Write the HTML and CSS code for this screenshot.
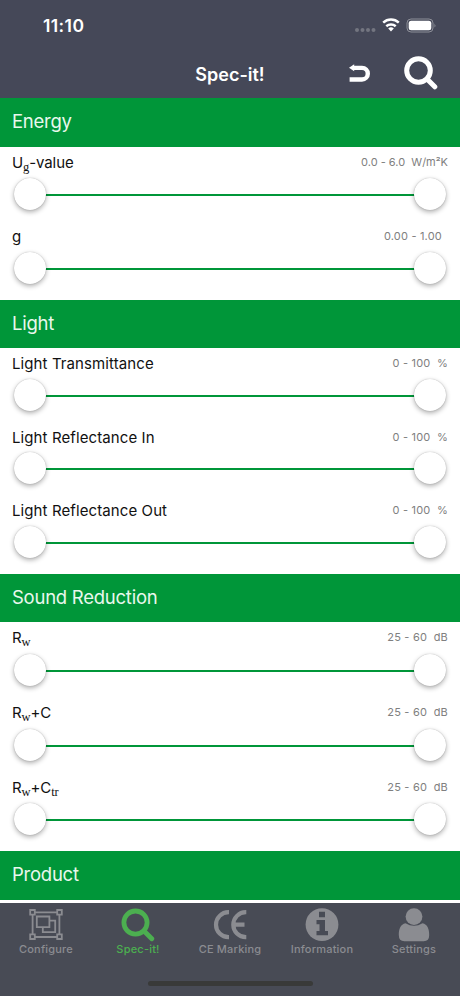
FILE: index.html
```
<!DOCTYPE html>
<html lang="en">
<head>
    <meta charset="UTF-8">
    <meta name="viewport" content="width=device-width, initial-scale=1.0">
    <title>Spec-it!</title>
    <link rel="stylesheet" href="styles.css">
</head>
<body>
<div class="app">
    <header class="top">
        <div class="status">
            <span class="time">11:10</span>
            <svg class="status-icons" width="84" height="20" viewBox="0 0 84 20">
                <g fill="#737580">
                    <circle cx="4" cy="14" r="2"/><circle cx="9.5" cy="14" r="2"/>
                    <circle cx="15" cy="14" r="2"/><circle cx="20.5" cy="14" r="2"/>
                </g>
                <g fill="none" stroke="#fff" stroke-width="2.5">
                    <path d="M30.2 6.6a11.6 11.6 0 0 1 15.6 0"/>
                    <path d="M33.3 10.2a7 7 0 0 1 9.4 0"/>
                </g>
                <path d="M35.2 12.6a4.2 4.2 0 0 1 5.6 0L38 15.6z" fill="#fff"/>
                <rect x="54" y="3" width="26" height="13" rx="4" fill="none" stroke="#8d8f98"/>
                <rect x="55.7" y="4.7" width="22.6" height="9.6" rx="2.5" fill="#fff"/>
                <path d="M81.5 7.5q1.8 2 0 4z" fill="#8d8f98"/>
            </svg>
        </div>
        <div class="nav">
            <h1>Spec-it!</h1>
            <svg class="undo" width="22" height="20" viewBox="0 0 22 20">
                <path d="M4 3.9h9a5.6 5.6 0 0 1 0 11.6H.6" fill="none" stroke="#fff" stroke-width="4.4"/>
                <path d="M0 3.7L5.2.2v7z" fill="#fff"/>
            </svg>
            <svg class="search" width="34" height="34" viewBox="0 0 34 34">
                <g fill="none" stroke="#fff" stroke-width="5">
                    <circle cx="14.5" cy="14.5" r="11.8"/>
                    <path d="M23 23l7.8 7.8" stroke-linecap="round"/>
                </g>
            </svg>
        </div>
    </header>

    <main>
        <section>
            <h2>Energy</h2>
            <div class="row sub">
                <div class="label"><span>U<sub>g</sub>-value</span><output class="tight">0.0 - 6.0&nbsp; W/m²K</output></div>
                <div class="slider"><i></i><i></i></div>
            </div>
            <div class="row">
                <div class="label"><span>g</span><output class="no-unit">0.00 - 1.00</output></div>
                <div class="slider"><i></i><i></i></div>
            </div>
        </section>
        <section>
            <h2>Light</h2>
            <div class="row">
                <div class="label"><span>Light Transmittance</span><output>0 - 100&nbsp; %</output></div>
                <div class="slider"><i></i><i></i></div>
            </div>
            <div class="row">
                <div class="label"><span>Light Reflectance In</span><output>0 - 100&nbsp; %</output></div>
                <div class="slider"><i></i><i></i></div>
            </div>
            <div class="row">
                <div class="label"><span>Light Reflectance Out</span><output>0 - 100&nbsp; %</output></div>
                <div class="slider"><i></i><i></i></div>
            </div>
        </section>
        <section>
            <h2>Sound Reduction</h2>
            <div class="row sub">
                <div class="label"><span>R<sub>w</sub></span><output>25 - 60&nbsp; dB</output></div>
                <div class="slider"><i></i><i></i></div>
            </div>
            <div class="row sub">
                <div class="label"><span>R<sub>w</sub>+C</span><output>25 - 60&nbsp; dB</output></div>
                <div class="slider"><i></i><i></i></div>
            </div>
            <div class="row sub">
                <div class="label"><span>R<sub>w</sub>+C<sub>tr</sub></span><output>25 - 60&nbsp; dB</output></div>
                <div class="slider"><i></i><i></i></div>
            </div>
        </section>
        <section>
            <h2>Product</h2>
        </section>
    </main>

    <footer>
        <nav class="tabs">
            <a>
                <svg width="34" height="34" viewBox="0 0 34 34" fill="none" stroke="currentColor" stroke-width="1.8">
                    <path d="M6 4.3h22M6 29h22M3.600 6v21M30.400 6v21"/>
                    <path d="M1.200 2h4.600v4.600H1.200zM28.200 2h4.600v4.600h-4.600zM1.200 26.400h4.600V31H1.200zM28.200 26.400h4.600V31h-4.600z"/>
                    <path d="M7.800 8.500h12.600v10.700H7.800zM20.400 12.600h5.800v11.600H13.800v-5"/>
                </svg>
                <span>Configure</span>
            </a>
            <a class="active">
                <svg width="34" height="34" viewBox="0 0 34 34" fill="none" stroke="currentColor" stroke-width="4.8">
                    <circle cx="14.5" cy="14.6" r="11.6"/>
                    <path d="M23 23l7.8 7.8" stroke-linecap="round"/>
                </svg>
                <span>Spec-it!</span>
            </a>
            <a>
                <svg width="34" height="34" viewBox="0 0 34 34" fill="none" stroke="currentColor" stroke-width="4.2">
                    <path d="M16 4.200h-.5a12.500 12.500 0 0 0 0 25h.5"/>
                    <path d="M33.300 4.200h-.5a12.500 12.500 0 0 0 0 25h.5M20.500 16.700h11"/>
                </svg>
                <span>CE Marking</span>
            </a>
            <a>
                <svg width="34" height="34" viewBox="0 0 34 34">
                    <circle cx="17" cy="16.6" r="16.4" fill="currentColor"/>
                    <path d="M14 3.8h6v5.4h-6zM11.5 12H20v11h3v4.3H11.5V23h3v-6.700h-3z" fill="#484b55"/>
                </svg>
                <span>Information</span>
            </a>
            <a>
                <svg width="34" height="34" viewBox="0 0 34 34" fill="currentColor">
                    <circle cx="17" cy="8.6" r="8.4"/>
                    <path d="M8.5 15.2Q17 20.4 25.5 15.2C30.5 16.2 32.2 21 32.2 27q0 6.2-5.5 6.2H7.3q-5.5 0-5.5-6.2C1.800 21 3.500 16.200 8.500 15.200z"/>
                </svg>
                <span>Settings</span>
            </a>
        </nav>
        <div class="home"></div>
    </footer>
</div>
</body>
</html>
```

FILE: styles.css
```
* {
    box-sizing: border-box;
}
body {
    margin: 0;
    background: #fff;
    font-family: Inter, "Liberation Sans", sans-serif;
}
.app {
    display: flex;
    flex-direction: column;
    height: 996px;
    overflow: hidden;
}
.top {
    height: 98px;
    background: #454858;
    color: #fff;
}
.status {
    display: flex;
    justify-content: space-between;
    height: 50px;
    padding: 15px 23px 0 43px;
}
.status-icons {
    margin-top: 1px;
}
.time {
    font-size: 17.500px;
    font-weight: 600;
    letter-spacing: .4px;
    line-height: 22px;
}
.nav {
    display: grid;
    grid-template-columns: 1fr auto 1fr;
    align-items: center;
    height: 48px;
    position: relative;
}
h1 {
    grid-column: 2;
    margin: 0;
    font-size: 18px;
    font-weight: 600;
}
.undo {
    position: absolute;
    left: 349px;
    top: 14px;
}
.search {
    position: absolute;
    left: 404px;
    top: 6px;
}
main {
    flex: 1;
    min-height: 0;
}
section {
    padding-bottom: 4.8px;
}
h2 {
    height: 48.7px;
    margin: 0;
    padding-left: 12px;
    background: #009639;
    color: #e9f8ed;
    font-size: 18.5px;
    font-weight: 400;
    letter-spacing: -.25px;
    line-height: 46px;
}
.row {
    height: 73.5px;
}
.sub {
    height: 74.7px;
}
.label {
    display: flex;
    justify-content: space-between;
    height: 28.600px;
    padding: 0 12px;
    font-size: 15px;
    letter-spacing: .1px;
    line-height: 31px;
    color: #111;
}
.sub .label {
    height: 29.500px;
    letter-spacing: -.1px;
}
sub {
    font-family: "Liberation Serif", serif;
    font-size: 12.500px;
    line-height: 0;
    vertical-align: -3px;
}
.label output {
    font-size: 11px;
    letter-spacing: .2px;
    line-height: 31px;
    color: #808080;
}
.label .tight {
    letter-spacing: 0;
}
.no-unit {
    padding-right: 6px;
}
.slider {
    display: flex;
    justify-content: space-between;
    align-items: center;
    height: 36px;
    padding: 0 14px 0 13.500px;
    background: linear-gradient(#009639, #009639) 30px 18px / 400px 2px no-repeat;
}
.slider i {
    width: 32px;
    height: 32px;
    border-radius: 50%;
    background: #fff;
    box-shadow: 0 2px 5px rgba(0, 0, 0, .32), 0 0 1px rgba(0, 0, 0, .3);
}
footer {
    height: 93px;
    background: #484b55;
}
.tabs {
    display: grid;
    grid-template-columns: repeat(5, 1fr);
    height: 78px;
    padding-top: 4.500px;
}
.tabs a {
    display: flex;
    flex-direction: column;
    align-items: center;
    color: #8b8c91;
}
.tabs span {
    font-size: 11px;
    font-weight: 500;
    letter-spacing: .2px;
    line-height: 15px;
}
.tabs .active {
    color: #4caf50;
}
.home {
    width: 165px;
    height: 5px;
    margin: 0 auto;
    border-radius: 3px;
    background: #393a39;
}
```
